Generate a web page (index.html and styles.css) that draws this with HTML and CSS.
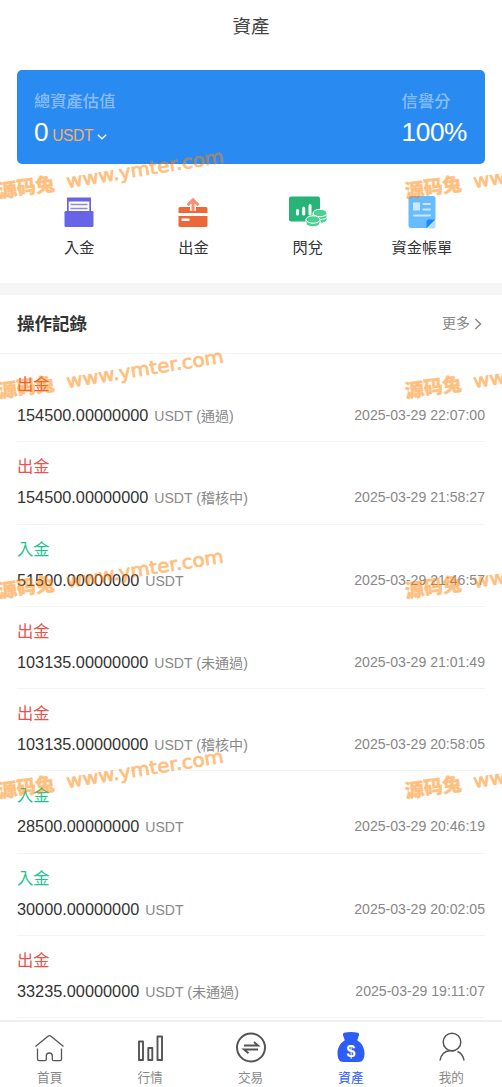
FILE: index.html
```html
<!DOCTYPE html>
<html lang="zh-Hant">
<head>
<meta charset="utf-8">
<title>資產</title>
<link rel="stylesheet" href="styles.css">
</head>
<body>
<div class="page">
  <header class="title">資產</header>
  <section class="card">
    <div class="balance">
      <div class="label">總資產估值</div>
      <div class="value">0<span class="unit">USDT</span><svg class="caret" width="10" height="6" viewBox="0 0 10 6"><path d="M.8.8 5 4.8 9.2.8" fill="none" stroke="#fff" stroke-width="1.3"/></svg></div>
    </div>
    <div class="credit">
      <div class="label">信譽分</div>
      <div class="value">100%</div>
    </div>
  </section>
  <nav class="actions">
    <a class="action"><svg width="40" height="36" viewBox="0 0 40 36"><path d="M8 3.500h24V17H8z" fill="#6864e8"/><path d="M9.700 7.500h20.600v10H9.700z" fill="#fff"/><path d="M11.500 10.500h17M11.500 14.500h17" stroke="#8c88ee" stroke-width="1.500"/><rect x="5.500" y="17" width="29" height="16" rx="1.200" fill="#6864e8"/></svg><span>入金</span></a>
    <a class="action"><svg width="40" height="36" viewBox="0 0 40 36"><path d="M7 13h26a1.500 1.500 0 0 1 1.500 1.500V19h-29v-4.500A1.500 1.500 0 0 1 7 13zM5.500 22h29v9.500a1.500 1.500 0 0 1-1.500 1.500H7a1.500 1.500 0 0 1-1.500-1.500z" fill="#ed6839"/><path d="M8.500 24.500h8V27h-8z" fill="#fff"/><path d="M20 17V7" stroke="#fff" stroke-width="6"/><path d="M20 17V6M14.500 11.300 20 5.800l5.500 5.500" fill="none" stroke="#fa9070" stroke-width="3"/></svg><span>出金</span></a>
    <a class="action"><svg width="40" height="36" viewBox="0 0 40 36"><rect x="1" y="2.500" width="31" height="25" rx="2" fill="#27b477"/><path d="M9.500 20v-3.500M15.700 20v-6M22 20v-8.500" stroke="#fff" stroke-width="3" stroke-linecap="round"/><g fill="#49d292" stroke="#fff" stroke-width="1"><path d="M25 19v6.500c0 5 14 5 14 0V19z"/><ellipse cx="32" cy="19" rx="7" ry="3.700"/><path d="M25 22.500c0 4 14 4 14 0" fill="none"/><path d="M18 25.500V29c0 5 14 5 14 0v-3.500z"/><ellipse cx="25" cy="25.500" rx="7" ry="3.700"/></g></svg><span>閃兌</span></a>
    <a class="action"><svg width="40" height="36" viewBox="0 0 40 36"><path d="M9 2h22a2.500 2.500 0 0 1 2.500 2.500V25l-9 9H9a2.500 2.500 0 0 1-2.500-2.500v-27A2.500 2.500 0 0 1 9 2z" fill="#67bbff"/><path d="M24.500 34.500V28a2.500 2.500 0 0 1 2.500-2.500h6.500z" fill="#168bff"/><path d="M33.500 26v6a2.500 2.500 0 0 1-2.500 2.500h-5.500z" fill="#b0dcff"/><path d="M11 8.500h7v8h-7z" fill="#cceaff"/><path d="M21.500 10h6.500M21.500 15.500H28M12 21.500h16" stroke="#cceaff" stroke-width="2" stroke-linecap="round"/></svg><span>資金帳單</span></a>
  </nav>
  <section class="records">
    <div class="head"><h2>操作記錄</h2><a class="more">更多<svg width="8" height="12" viewBox="0 0 8 12"><path d="M1.300 1 6.500 6 1.300 11" fill="none" stroke="#888" stroke-width="1.500"/></svg></a></div>
    <ul class="list">
      <li class="row"><div class="kind out">出金</div><div class="detail"><b>154500.00000000</b><span>USDT (通過)</span><time>2025-03-29 22:07:00</time></div></li>
      <li class="row"><div class="kind out">出金</div><div class="detail"><b>154500.00000000</b><span>USDT (稽核中)</span><time>2025-03-29 21:58:27</time></div></li>
      <li class="row"><div class="kind in">入金</div><div class="detail"><b>51500.00000000</b><span>USDT</span><time>2025-03-29 21:46:57</time></div></li>
      <li class="row"><div class="kind out">出金</div><div class="detail"><b>103135.00000000</b><span>USDT (未通過)</span><time>2025-03-29 21:01:49</time></div></li>
      <li class="row"><div class="kind out">出金</div><div class="detail"><b>103135.00000000</b><span>USDT (稽核中)</span><time>2025-03-29 20:58:05</time></div></li>
      <li class="row"><div class="kind in">入金</div><div class="detail"><b>28500.00000000</b><span>USDT</span><time>2025-03-29 20:46:19</time></div></li>
      <li class="row"><div class="kind in">入金</div><div class="detail"><b>30000.00000000</b><span>USDT</span><time>2025-03-29 20:02:05</time></div></li>
      <li class="row"><div class="kind out">出金</div><div class="detail"><b>33235.00000000</b><span>USDT (未通過)</span><time>2025-03-29 19:11:07</time></div></li>
    </ul>
  </section>
  <nav class="tabs">
    <a class="tab"><svg width="34" height="34" viewBox="0 0 34 34"><path d="M2.500 15.500 15 5.200q1.500-1.200 3 0l12.500 10.300M4.500 17.500V28q0 1.700 1.700 1.700h5.600q1.500 0 1.500-1.500V25a3 3 0 0 1 6 0v3.200q0 1.500 1.500 1.500h6q1.700 0 1.700-1.700V17.500" fill="none" stroke="#555" stroke-width="1.300"/></svg><span>首頁</span></a>
    <a class="tab"><svg width="34" height="34" viewBox="0 0 34 34"><path d="M5 10.500h4V29H5zM14.300 17h4v12h-4zM23.500 5.500h4.500V29h-4.500z" fill="none" stroke="#555" stroke-width="1.900" stroke-linejoin="round"/></svg><span>行情</span></a>
    <a class="tab"><svg width="34" height="34" viewBox="0 0 34 34"><circle cx="17" cy="16.500" r="14" fill="none" stroke="#555" stroke-width="2"/><path d="M10 14.500h14l-4-3.500M24 18.500H10l4.500 3.700" fill="none" stroke="#555" stroke-width="1.900"/></svg><span>交易</span></a>
    <a class="tab active"><svg width="34" height="34" viewBox="0 0 34 34"><path d="M10 1.800q7-1.500 14 0 1.500.5 1 2.500l-1.800 5C28 12.300 30.500 17 30.500 22.500c0 5-2 8.500-6 8.500h-15c-4 0-6-3.500-6-8.500 0-5.500 2.500-10.200 7.300-13.200L9 4.300q-.5-2 1-2.500z" fill="#2d5cf6"/><text x="17" y="26" text-anchor="middle" class="dollar">$</text></svg><span>資產</span></a>
    <a class="tab"><svg width="34" height="34" viewBox="0 0 34 34"><circle cx="17" cy="11" r="8.800" fill="none" stroke="#555" stroke-width="1.500"/><path d="M5 29.500c.6-5.500 5-9.700 9.500-9.700h5M22.500 20.500c3.500 1.500 6 5 6.500 9" fill="none" stroke="#555" stroke-width="1.500"/></svg><span>我的</span></a>
  </nav>
  <svg class="watermark" width="502" height="1087" viewBox="0 0 502 1087" aria-hidden="true">
    <defs><g id="mark"><text class="mark-cjk" transform="translate(-1 198) rotate(-8)" textLength="57" lengthAdjust="spacingAndGlyphs">源码兔</text><text class="mark-url" transform="translate(67.500 188) rotate(-9.300)" textLength="159" lengthAdjust="spacingAndGlyphs">www.ymter.com</text></g></defs>
    <use href="#mark"/><use href="#mark" x="407"/>
    <use href="#mark" y="200"/><use href="#mark" x="407" y="200"/>
    <use href="#mark" y="400"/><use href="#mark" x="407" y="400"/>
    <use href="#mark" y="600"/><use href="#mark" x="407" y="600"/>
  </svg>
</div>
</body>
</html>
```
FILE: styles.css
```css
* { box-sizing: border-box; }
body { margin: 0; background: #fff; color: #333; font-family: "Liberation Sans", "Noto Sans CJK TC", sans-serif; }
.page { position: relative; width: 502px; height: 1087px; overflow: hidden; display: flex; flex-direction: column; }
.title { height: 70px; padding-top: 14px; line-height: 26px; font-size: 18.500px; text-align: center; color: #444; }
.card { height: 94px; margin: 0 17px; padding: 20px 18px 0 17px; border-radius: 5px; background: #298bf2; display: flex; justify-content: space-between; flex: none; }
.label { height: 23px; line-height: 23px; font-size: 16.300px; font-weight: 500; color: rgba(255,255,255,.45); }
.value { height: 38px; line-height: 38px; font-size: 26.200px; letter-spacing: -.4px; color: #fff; display: flex; align-items: baseline; }
.unit { margin-left: 4px; font-size: 15.600px; color: #f9ad66; }
.caret { margin-left: 4px; align-self: center; position: relative; top: 5px; }
.actions { height: 119px; padding: 30px 23px 0 22px; display: grid; grid-template-columns: repeat(4, 1fr); flex: none; }
.action { display: flex; flex-direction: column; align-items: center; font-size: 15.200px; line-height: 24px; }
.action span { margin-top: 6px; white-space: nowrap; }
.records { border-top: 12px solid #f5f5f5; flex: none; height: 737px; overflow: hidden; }
.head { height: 59px; padding: 0 20px 0 17px; display: flex; justify-content: space-between; align-items: center; border-bottom: 1px solid #f3f3f3; }
h2 { margin: 0; font-size: 17.500px; line-height: 26px; font-weight: 700; }
.more { display: flex; align-items: center; gap: 4px; font-size: 14px; line-height: 20px; padding-bottom: 2px; color: #888; }
.more svg { position: relative; top: 1px; }
.list { list-style: none; margin: 0; padding: 6px 17px 0; }
.row { height: 82.300px; padding-top: 12px; border-bottom: 1px solid #f4f4f4; }
.kind { height: 24px; line-height: 24px; font-size: 16.300px; }
.out { color: #e8534c; }
.in { color: #1bc48d; }
.detail { height: 24px; margin-top: 7px; line-height: 24px; display: flex; align-items: baseline; font-size: 14.080px; color: #888; white-space: nowrap; }
.detail b { font-weight: 400; font-size: 16.300px; color: #333; margin-right: 6px; }
.detail time { margin-left: auto; position: relative; top: -1px; }
.tabs { height: 67px; border-top: 2px solid #efefef; background: #fff; display: grid; grid-template-columns: repeat(5, 1fr); position: relative; flex: none; }
.tab { display: flex; flex-direction: column; align-items: center; padding-top: 9px; font-size: 12.600px; line-height: 20px; color: #888; }
.tab span { margin-top: 3px; padding-right: 1px; }
.active { color: #2d5cf6; }
.dollar { fill: #fff; font-size: 16px; font-weight: 700; }
.watermark { position: absolute; inset: 0; opacity: .5; pointer-events: none; fill: #ff8200; }
.mark-cjk { font: 900 19px "Noto Sans CJK SC", sans-serif; stroke: #ff8200; stroke-width: .4px; }
.mark-url { font: 400 18.500px "DejaVu Sans", sans-serif; stroke: #ff8200; stroke-width: .8px; stroke-linejoin: round; }
```
